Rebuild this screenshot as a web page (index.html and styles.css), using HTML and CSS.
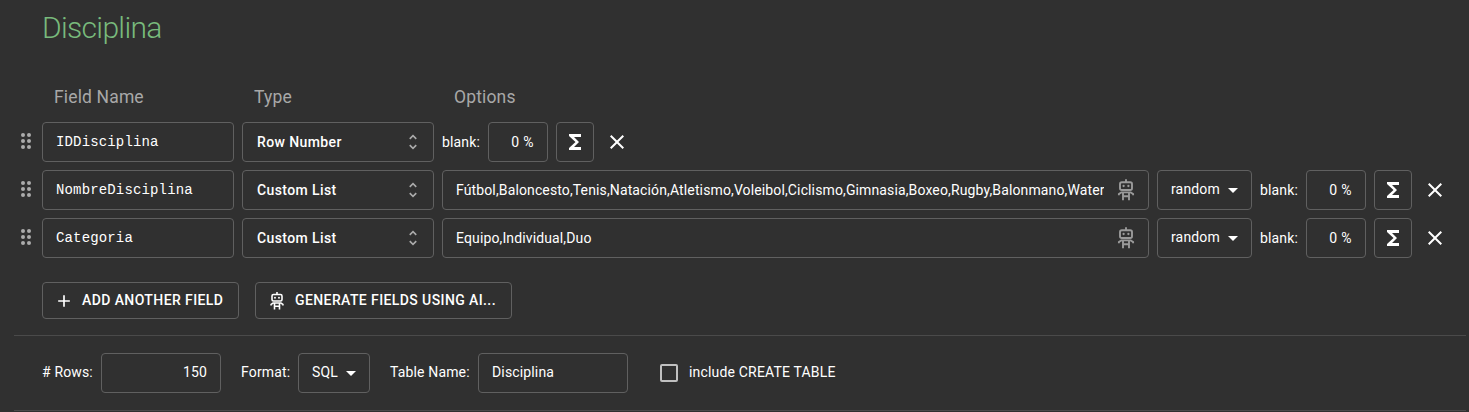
FILE: index.html
```html
<!DOCTYPE html>
<html lang="es">
<head>
<meta charset="utf-8">
<title>Disciplina</title>
<link rel="stylesheet" href="styles.css">
</head>
<body>
<svg class="defs" aria-hidden="true">
  <symbol id="drag" viewBox="0 0 24 24"><circle cx="9" cy="6" r="2"/><circle cx="15" cy="6" r="2"/><circle cx="9" cy="12" r="2"/><circle cx="15" cy="12" r="2"/><circle cx="9" cy="18" r="2"/><circle cx="15" cy="18" r="2"/></symbol>
  <symbol id="unfold" viewBox="0 0 24 24"><path d="M12 5.83 15.17 9l1.41-1.41L12 3 7.41 7.59 8.83 9zm0 12.34L8.83 15l-1.41 1.41L12 21l4.59-4.59L15.17 15z"/></symbol>
  <symbol id="sigma" viewBox="0 0 24 24"><path d="M18 4H6v2l6.500 6L6 18v2h12v-3h-7l5-5-5-5h7z"/></symbol>
  <symbol id="close" viewBox="0 0 24 24"><path d="M19 6.410 17.590 5 12 10.590 6.410 5 5 6.410 10.590 12 5 17.590 6.410 19 12 13.410 17.590 19 19 17.590 13.410 12z"/></symbol>
  <symbol id="caret" viewBox="0 0 24 24"><path d="m7 10 5 5 5-5z"/></symbol>
  <symbol id="plus" viewBox="0 0 24 24"><path d="M19 13h-6v6h-2v-6H5v-2h6V5h2v6h6z"/></symbol>
  <symbol id="robot" viewBox="0 0 24 24"><g fill="none" stroke="currentColor" stroke-width="1.900"><path d="M12 1.200v3"/><rect x="6" y="4.200" width="12" height="7.800" rx="1.800"/><path d="M4.900 17.300v-1.300l2.400-1.600h9.400l2.400 1.600v1.300"/><path d="M9 14.400v7.800M15 14.400v7.800M9 18.300h6"/></g><circle cx="9.600" cy="8" r="1.150"/><circle cx="14.400" cy="8" r="1.150"/></symbol>
</svg>
<main class="schema">
  <h1 class="title">Disciplina</h1>
  <div class="fields">
    <div class="heads"><span>Field Name</span><span>Type</span><span>Options</span></div>
    <div class="row">
      <svg class="drag"><use href="#drag"/></svg>
      <div class="box name">IDDisciplina</div>
      <div class="box type">Row Number<svg><use href="#unfold"/></svg></div>
      <span class="label">blank:</span><div class="box pct">0 %</div>
      <div class="box formula"><svg><use href="#sigma"/></svg></div>
      <svg class="remove"><use href="#close"/></svg>
    </div>
    <div class="row">
      <svg class="drag"><use href="#drag"/></svg>
      <div class="box name">NombreDisciplina</div>
      <div class="box type">Custom List<svg><use href="#unfold"/></svg></div>
      <div class="box list"><span class="values">Fútbol,Baloncesto,Tenis,Natación,Atletismo,Voleibol,Ciclismo,Gimnasia,Boxeo,Rugby,Balonmano,Water</span><svg><use href="#robot"/></svg></div>
      <div class="box mode"><span>random</span><svg><use href="#caret"/></svg></div>
      <span class="label">blank:</span><div class="box pct">0 %</div>
      <div class="box formula"><svg><use href="#sigma"/></svg></div>
      <svg class="remove"><use href="#close"/></svg>
    </div>
    <div class="row">
      <svg class="drag"><use href="#drag"/></svg>
      <div class="box name">Categoria</div>
      <div class="box type">Custom List<svg><use href="#unfold"/></svg></div>
      <div class="box list"><span class="values">Equipo,Individual,Duo</span><svg><use href="#robot"/></svg></div>
      <div class="box mode"><span>random</span><svg><use href="#caret"/></svg></div>
      <span class="label">blank:</span><div class="box pct">0 %</div>
      <div class="box formula"><svg><use href="#sigma"/></svg></div>
      <svg class="remove"><use href="#close"/></svg>
    </div>
  </div>
  <div class="actions">
    <div class="btn add"><svg><use href="#plus"/></svg><span>ADD ANOTHER FIELD</span></div>
    <div class="btn ai"><svg><use href="#robot"/></svg><span>GENERATE FIELDS USING AI...</span></div>
  </div>
  <div class="output">
    <span class="cap rows-cap"># Rows:</span><div class="box count">150</div>
    <span class="cap format-cap">Format:</span><div class="box format"><span>SQL</span><svg><use href="#caret"/></svg></div>
    <span class="cap table-cap">Table Name:</span><div class="box table">Disciplina</div>
    <span class="check"></span><span class="cap include">include CREATE TABLE</span>
  </div>
</main>
</body>
</html>
```
FILE: styles.css
```css
* { box-sizing: border-box; }
body {
  margin: 0;
  height: 412px;
  overflow: hidden;
  background: #303030;
  color: #fff;
  font: 14px/20px Roboto, sans-serif;
  letter-spacing: 0.15px;
}
svg { display: block; flex: none; width: 24px; height: 24px; fill: currentColor; }
.defs { position: absolute; width: 0; height: 0; }
.schema { padding: 0 3px 0 14px; }
.title {
  margin: 0 0 0 28px;
  padding-top: 10px;
  height: 84px;
  font-size: 30px;
  line-height: 36px;
  font-weight: 300;
  letter-spacing: -0.68px;
  color: #78ba7c;
}
.heads {
  display: grid;
  grid-template-columns: 200px 200px 1fr;
  height: 38px;
  padding-left: 40px;
  font-size: 17.5px;
  line-height: 26px;
  color: #a8a8a8;
}
.fields { display: flex; flex-direction: column; }
.row { display: flex; align-items: center; gap: 8px; height: 40px; margin-bottom: 8px; }
.drag { margin: 0 -4px 2px 0; color: #acacac; }
.box {
  display: flex;
  align-items: center;
  flex: none;
  height: 40px;
  border: 1px solid #606060;
  border-radius: 4px;
  padding: 0 13px;
  white-space: nowrap;
}
.name { width: 192px; font: 14px/20px "Liberation Mono", monospace; }
.type { width: 192px; justify-content: space-between; padding: 0 10px 0 14px; font-weight: 500; letter-spacing: 0.4px; }
.type svg { width: 20px; height: 20px; color: #acacac; }
.label { width: 38px; }
.pct { width: 60px; justify-content: flex-end; letter-spacing: 0.4px; }
.formula { width: 38px; padding: 0; justify-content: center; }
.remove { margin-left: 3px; }
.list { width: 707px; padding-right: 10px; gap: 10px; }
.values { flex: 1; min-width: 0; overflow: hidden; letter-spacing: 0.128px; }
.list svg { color: #9a9a9a; }
.mode { width: 95px; padding: 0 6px 0 13px; justify-content: space-between; }
.mode span { padding-bottom: 2px; }
.actions { display: flex; gap: 16px; margin: 16px 0 0 28px; }
.btn {
  display: flex;
  align-items: center;
  height: 37px;
  border: 1px solid #606060;
  border-radius: 4px;
  font-weight: 500;
  letter-spacing: 0.4px;
  white-space: nowrap;
}
.btn span { padding-bottom: 2px; }
.btn svg { width: 20px; height: 20px; }
.add { width: 197px; padding-left: 11px; gap: 8px; }
.ai { width: 257px; padding-left: 11px; gap: 8px; }
.output {
  display: flex;
  align-items: center;
  height: 76px;
  margin-top: 16px;
  padding-left: 28px;
  border: solid #4a4a4a;
  border-width: 1px 0;
}
.cap { padding-bottom: 2px; white-space: nowrap; }
.rows-cap { width: 59px; }
.format-cap { width: 57px; }
.table-cap { width: 88px; }
.include { letter-spacing: 0.18px; }
.count { width: 120px; margin-right: 20px; justify-content: flex-end; padding-bottom: 2px; }
.format { width: 72px; margin-right: 20px; padding: 0 6px 0 13px; justify-content: space-between; }
.format span { padding-bottom: 2px; }
.table { width: 150px; padding-bottom: 2px; }
.check { width: 18px; height: 18px; margin: 0 11px 0 32px; border: 2px solid #c0c0c0; border-radius: 2px; }
```
